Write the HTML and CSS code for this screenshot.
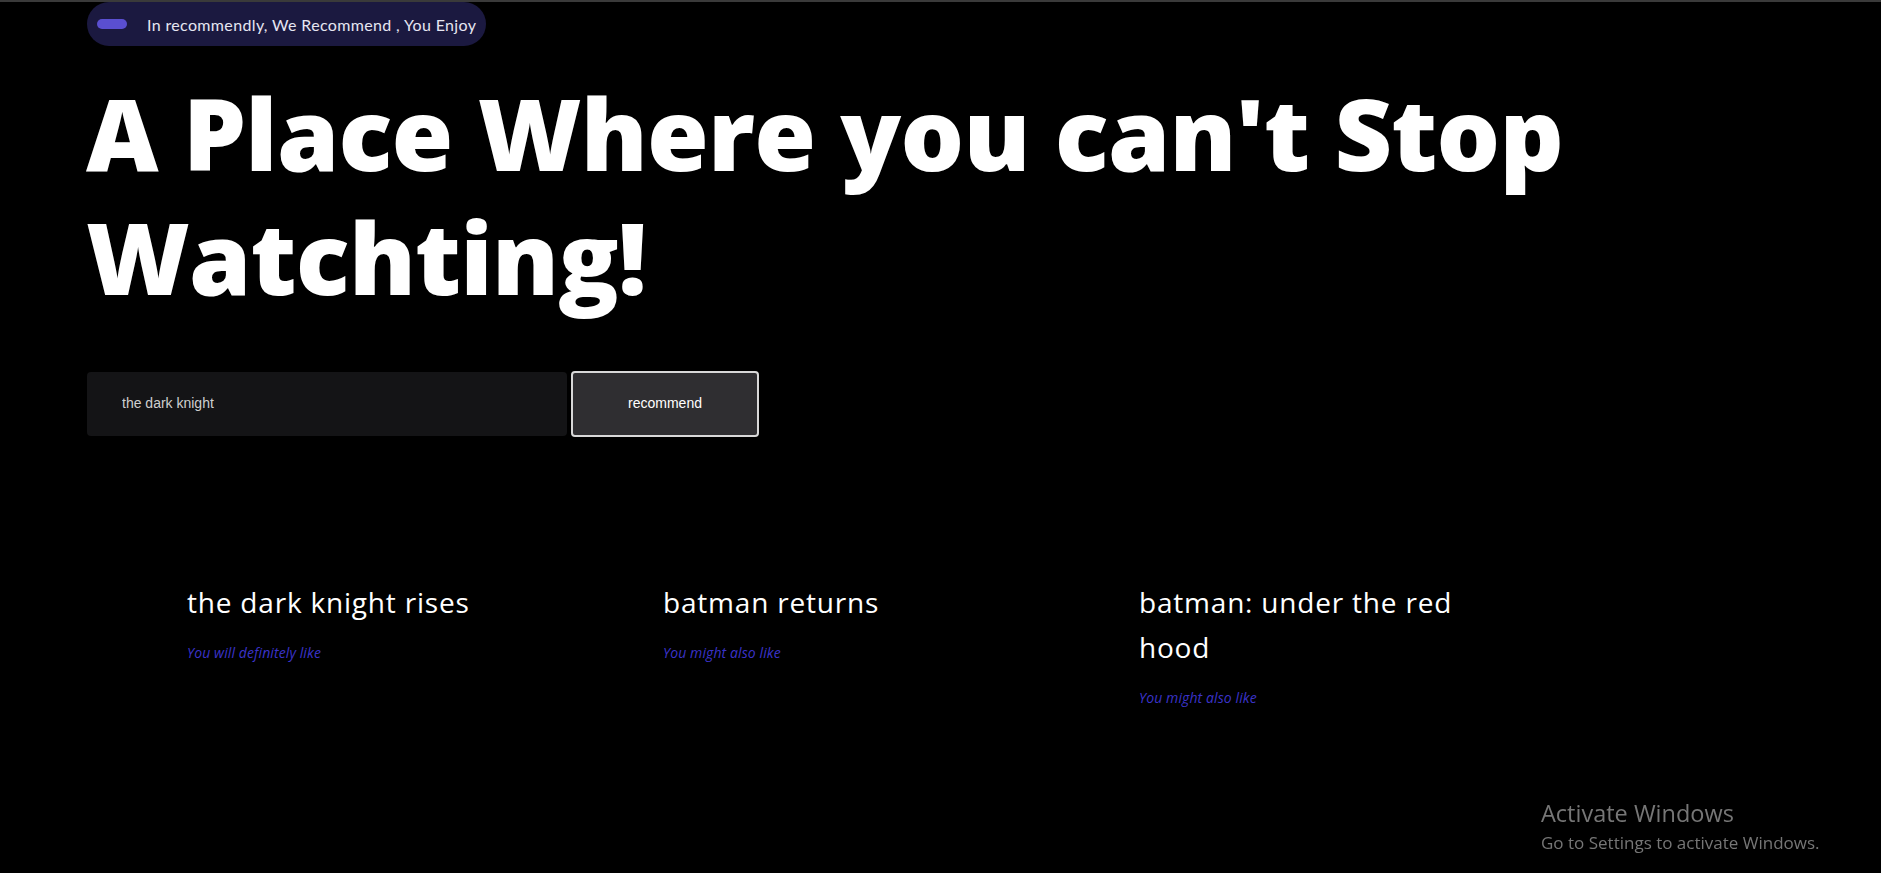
FILE: index.html
```html
<!DOCTYPE html>
<html lang="en">
<head>
<meta charset="utf-8">
<title>recommendly</title>
<link rel="stylesheet" href="styles.css">
</head>
<body>
<main class="page">
  <div class="badge"><span class="badge-pill"></span><span class="badge-text">In recommendly, We Recommend , You Enjoy</span></div>
  <h1 class="hero">A Place Where you can't Stop<br>Watchting!</h1>
  <form class="search">
    <input class="search-input" type="text" value="the dark knight">
    <button class="search-btn" type="button">recommend</button>
  </form>
  <section class="results">
    <div class="card">
      <h2 class="card-title">the dark knight rises</h2>
      <p class="card-note">You will definitely like</p>
    </div>
    <div class="card">
      <h2 class="card-title">batman returns</h2>
      <p class="card-note">You might also like</p>
    </div>
    <div class="card">
      <h2 class="card-title">batman: under the red hood</h2>
      <p class="card-note">You might also like</p>
    </div>
  </section>
</main>
<div class="watermark">
  <div class="wm-title">Activate Windows</div>
  <div class="wm-sub">Go to Settings to activate Windows.</div>
</div>
</body>
</html>
```

FILE: styles.css
```css
html, body {
  margin: 0;
  padding: 0;
  background: #000;
}
body {
  border-top: 2px solid #3a3a3a;
  min-height: 871px;
  font-family: "Lato", "Noto Sans", sans-serif;
  color: #fff;
  overflow: hidden;
  font-variant-ligatures: none;
}
.page {
  padding-left: 87px;
}
.badge {
  display: inline-flex;
  align-items: center;
  height: 44px;
  padding: 0 10px;
  background: #1b1940;
  border-radius: 22px;
  gap: 20px;
}
.badge-pill {
  width: 30px;
  height: 10px;
  border-radius: 5px;
  background: #5a4fd0;
}
.badge-text {
  font-size: 16px;
  color: #e6e6f2;
  letter-spacing: 0.35px;
}
.hero {
  margin: 24px 0 0 -1px;
  font-family: "Open Sans", "Lato", sans-serif;
  font-size: 100px;
  line-height: 124px;
  font-weight: 800;
  letter-spacing: -0.8px;
  color: #fff;
}
.search {
  display: flex;
  align-items: center;
  margin-top: 53px;
  gap: 4px;
}
.search-input {
  box-sizing: border-box;
  width: 480px;
  height: 64px;
  border: none;
  border-radius: 4px;
  background: #141416;
  color: #cfcfcf;
  font-family: "Liberation Sans", Arial, sans-serif;
  font-size: 14px;
  padding: 0 0 2px 35px;
  outline: none;
}
.search-btn {
  box-sizing: border-box;
  width: 188px;
  height: 66px;
  border: 2px solid #d8d8d8;
  border-radius: 4px;
  background: #2f2e31;
  color: #fff;
  font-family: "Liberation Sans", Arial, sans-serif;
  font-size: 14px;
  padding-bottom: 4px;
}
.results {
  display: grid;
  grid-template-columns: repeat(3, 476px);
  margin-top: 143px;
  padding-left: 100px;
}
.card {
  max-width: 345px;
}
.card-title {
  margin: 0;
  font-family: "Open Sans", "Lato", sans-serif;
  font-size: 28px;
  line-height: 45px;
  font-weight: 500;
  letter-spacing: 0.8px;
}
.card-note {
  margin: 18px 0 0;
  font-family: "Open Sans", "Lato", sans-serif;
  font-size: 14px;
  font-style: italic;
  color: #3b33c9;
  letter-spacing: 0.1px;
}
.watermark {
  position: fixed;
  left: 1541px;
  top: 798px;
  font-family: "Open Sans", "Noto Sans", sans-serif;
  color: #767676;
}
.wm-title {
  font-size: 23.5px;
  line-height: 30px;
}
.wm-sub {
  margin-top: 3px;
  font-size: 17px;
  line-height: 24px;
}
```
